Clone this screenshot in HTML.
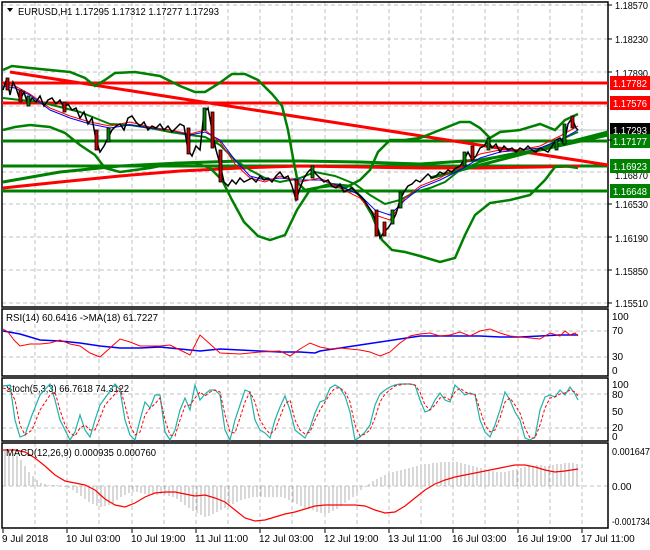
<!DOCTYPE html>
<html><head><meta charset="utf-8"><style>
html,body{margin:0;padding:0;background:#fff;}
svg{display:block;font-family:"Liberation Sans",sans-serif;}
</style></head><body>
<svg width="650" height="550" viewBox="0 0 650 550" xmlns="http://www.w3.org/2000/svg">
<rect width="650" height="550" fill="#fff"/>
<g stroke="#c0c0c0" stroke-dasharray="4,3" stroke-width="1">
<line x1="35" y1="2" x2="35" y2="529"/><line x1="67" y1="2" x2="67" y2="529"/><line x1="99" y1="2" x2="99" y2="529"/><line x1="132" y1="2" x2="132" y2="529"/><line x1="164" y1="2" x2="164" y2="529"/><line x1="196" y1="2" x2="196" y2="529"/><line x1="228" y1="2" x2="228" y2="529"/><line x1="260" y1="2" x2="260" y2="529"/><line x1="292" y1="2" x2="292" y2="529"/><line x1="325" y1="2" x2="325" y2="529"/><line x1="357" y1="2" x2="357" y2="529"/><line x1="389" y1="2" x2="389" y2="529"/><line x1="421" y1="2" x2="421" y2="529"/><line x1="453" y1="2" x2="453" y2="529"/><line x1="485" y1="2" x2="485" y2="529"/><line x1="518" y1="2" x2="518" y2="529"/><line x1="550" y1="2" x2="550" y2="529"/><line x1="582" y1="2" x2="582" y2="529"/>
<line x1="2" y1="5" x2="608" y2="5"/><line x1="2" y1="39" x2="608" y2="39"/><line x1="2" y1="72" x2="608" y2="72"/><line x1="2" y1="106" x2="608" y2="106"/><line x1="2" y1="140" x2="608" y2="140"/><line x1="2" y1="172" x2="608" y2="172"/><line x1="2" y1="204" x2="608" y2="204"/><line x1="2" y1="237" x2="608" y2="237"/><line x1="2" y1="270" x2="608" y2="270"/><line x1="2" y1="303" x2="608" y2="303"/>
<line x1="2" y1="331" x2="608" y2="331"/><line x1="2" y1="357" x2="608" y2="357"/>
<line x1="2" y1="394" x2="608" y2="394"/><line x1="2" y1="428" x2="608" y2="428"/>
<line x1="2" y1="486" x2="608" y2="486"/>
</g>
<line x1="2" y1="130" x2="608" y2="130" stroke="#c0c0c0" stroke-width="1"/>
<g fill="none" stroke="#000" stroke-width="1.5">
<rect x="2" y="2" width="606" height="305"/>
<rect x="2" y="309" width="606" height="67"/>
<rect x="2" y="378" width="606" height="63"/>
<rect x="2" y="443" width="606" height="85"/>
</g>
<g stroke-width="3">
<line x1="2" y1="83" x2="608" y2="83" stroke="#f00"/>
<line x1="2" y1="103" x2="608" y2="103" stroke="#f00"/>
<line x1="2" y1="141" x2="608" y2="141" stroke="#008000"/>
<line x1="2" y1="166" x2="608" y2="166" stroke="#008000"/>
<line x1="2" y1="191" x2="608" y2="191" stroke="#008000"/>
</g>
<line x1="10" y1="72" x2="608" y2="165" stroke="#f00" stroke-width="3"/>
<polyline fill="none" stroke="#f00" stroke-width="3" points="3,188 60,182 120,176 180,171 240,168 300,166 360,167 420,168 480,168 540,167 580,166"/>
<polyline fill="none" stroke="#008000" stroke-width="3" points="3,182 60,172 120,166 180,163 240,161 300,161 360,162 420,164 480,160 540,150 608,135"/>
<line x1="430" y1="178" x2="608" y2="132" stroke="#008000" stroke-width="3"/>
<g fill="none" stroke="#008000" stroke-width="2.5">
<polyline points="3,70 12,66 30,68 50,70 70,72 85,78 95,86 105,80 115,73 135,72 160,76 180,86 195,92 205,92 218,84 232,74 245,74 258,80 272,94 282,106 288,130 293,158 298,183 305,190 315,188 330,186 345,188 360,180 370,170 378,152 390,140 405,140 420,138 440,130 460,122 470,122 480,128 490,138 500,132 520,130 540,124 555,130 565,120 578,114"/>
<polyline points="3,130 15,127 30,125 50,127 65,133 80,145 95,155 105,168 120,172 150,168 175,163 195,163 210,168 222,180 232,200 244,222 258,236 270,240 285,235 297,210 310,190 330,184 350,186 362,198 372,215 382,240 392,250 405,252 420,256 440,262 455,258 465,235 475,215 490,203 510,200 530,195 545,180 555,167 565,166 578,168"/>
<polyline stroke-width="2" points="3,98 20,100 40,102 60,107 80,112 95,118 110,124 130,125 150,128 170,132 190,135 205,137 220,145 235,160 250,170 265,178 280,182 300,178 315,172 335,176 355,184 370,195 385,204 400,200 415,192 430,188 445,182 460,170 480,162 500,156 520,152 540,150 560,140 578,132"/>
</g>
<polyline fill="none" stroke="#00f" stroke-width="1" points="3,86 15,88 30,95 50,110 70,118 90,124 110,128 130,125 150,128 170,130 190,135 205,132 220,140 235,160 250,176 265,180 280,178 300,180 320,180 340,186 360,195 375,210 390,215 405,200 420,188 440,180 460,170 480,158 500,152 520,150 540,148 560,140 578,130"/>
<polyline fill="none" stroke="#f00" stroke-width="1" points="3,84 15,86 30,94 50,108 70,116 90,122 110,126 130,122 150,127 170,130 190,134 205,130 220,142 235,164 250,178 265,182 280,176 300,182 320,178 340,188 360,198 375,215 390,220 405,198 420,186 440,178 460,166 480,154 500,150 520,150 540,146 560,136 578,126"/>
<g stroke="#000" stroke-width="1">
<polyline fill="none" stroke-width="1.5" points="3,90 7,78 10,95 13,82 16,88 20,100 24,92 28,105 32,98 36,102 40,96 44,106 48,100 52,98 56,104 60,100 64,108 68,104 72,110 76,108 80,118 84,112 88,124 92,118 96,140 100,152 104,146 108,138 112,130 116,126 120,124 124,130 128,118 132,116 136,122 140,126 144,122 148,130 152,126 156,128 160,124 164,130 168,126 172,132 176,128 180,124 184,126 188,150 192,156 196,146 200,150 204,112 208,108 212,130 216,150 220,164 224,182 228,186 232,180 236,184 240,178 244,182 248,180 252,178 256,182 260,176 264,180 268,178 272,182 276,176 280,172 284,178 288,176 292,186 296,200 300,188 304,178 308,172 312,168 316,174 320,178 324,182 328,180 332,186 336,188 340,184 344,192 348,190 352,188 356,192 360,196 364,200 368,206 372,212 376,222 380,238 384,232 388,228 392,222 396,214 400,200 404,192 408,186 412,184 416,180 420,182 424,178 428,174 432,178 436,176 440,172 444,174 448,170 452,172 456,168 460,166 464,160 468,152 472,160 476,156 480,148 484,146 488,140 492,148 496,144 500,152 504,146 508,150 512,148 516,152 520,148 524,150 528,146 532,150 536,152 540,148 544,150 548,152 552,146 556,140 560,138 564,144 568,124 572,118 576,128 578,130"/>
</g>
<g stroke="#000" stroke-width="0.8">
<rect x="6" y="78" width="3" height="12" fill="#c00"/><rect x="19" y="90" width="3" height="12" fill="#c00"/><rect x="27" y="96" width="3" height="10" fill="#080"/><rect x="63" y="102" width="3" height="10" fill="#c00"/><rect x="95" y="130" width="3" height="20" fill="#c00"/><rect x="107" y="128" width="3" height="14" fill="#080"/><rect x="187" y="128" width="3" height="26" fill="#c00"/><rect x="203" y="108" width="3" height="22" fill="#080"/><rect x="211" y="112" width="3" height="36" fill="#c00"/><rect x="219" y="150" width="3" height="32" fill="#c00"/><rect x="295" y="180" width="3" height="20" fill="#c00"/><rect x="311" y="166" width="3" height="12" fill="#080"/><rect x="375" y="210" width="3" height="26" fill="#c00"/><rect x="383" y="222" width="3" height="14" fill="#c00"/><rect x="391" y="210" width="3" height="14" fill="#080"/><rect x="399" y="192" width="3" height="16" fill="#080"/><rect x="463" y="152" width="3" height="14" fill="#080"/><rect x="471" y="146" width="3" height="14" fill="#c00"/><rect x="487" y="138" width="3" height="12" fill="#080"/><rect x="555" y="140" width="3" height="10" fill="#080"/><rect x="563" y="124" width="3" height="20" fill="#080"/><rect x="571" y="116" width="3" height="12" fill="#c00"/>
</g>
<g font-size="10" fill="#000">
<text x="615" y="9" textLength="33" lengthAdjust="spacingAndGlyphs">1.18570</text><text x="615" y="43" textLength="33" lengthAdjust="spacingAndGlyphs">1.18230</text><text x="615" y="77" textLength="33" lengthAdjust="spacingAndGlyphs">1.17890</text><text x="615" y="145" textLength="33" lengthAdjust="spacingAndGlyphs">1.17210</text><text x="615" y="179" textLength="33" lengthAdjust="spacingAndGlyphs">1.16870</text><text x="615" y="208" textLength="33" lengthAdjust="spacingAndGlyphs">1.16530</text><text x="615" y="242" textLength="33" lengthAdjust="spacingAndGlyphs">1.16190</text><text x="615" y="275" textLength="33" lengthAdjust="spacingAndGlyphs">1.15850</text><text x="615" y="307" textLength="33" lengthAdjust="spacingAndGlyphs">1.15510</text>
</g>
<g font-size="10">
<rect x="610" y="76" width="40" height="14" fill="#f00"/><text x="613" y="87" fill="#fff" textLength="34" lengthAdjust="spacingAndGlyphs">1.17782</text>
<rect x="610" y="96" width="40" height="14" fill="#f00"/><text x="613" y="107" fill="#fff" textLength="34" lengthAdjust="spacingAndGlyphs">1.17576</text>
<rect x="610" y="123" width="40" height="14" fill="#000"/><text x="613" y="134" fill="#fff" textLength="34" lengthAdjust="spacingAndGlyphs">1.17293</text>
<rect x="610" y="134" width="40" height="14" fill="#008000"/><text x="613" y="145" fill="#fff" textLength="34" lengthAdjust="spacingAndGlyphs">1.17177</text>
<rect x="610" y="159" width="40" height="14" fill="#008000"/><text x="613" y="170" fill="#fff" textLength="34" lengthAdjust="spacingAndGlyphs">1.16923</text>
<rect x="610" y="184" width="40" height="14" fill="#008000"/><text x="613" y="195" fill="#fff" textLength="34" lengthAdjust="spacingAndGlyphs">1.16648</text>
</g>
<g stroke="#000"><line x1="608" y1="5" x2="612" y2="5"/><line x1="608" y1="39" x2="612" y2="39"/><line x1="608" y1="72" x2="612" y2="72"/><line x1="608" y1="140" x2="612" y2="140"/><line x1="608" y1="204" x2="612" y2="204"/><line x1="608" y1="237" x2="612" y2="237"/><line x1="608" y1="270" x2="612" y2="270"/><line x1="608" y1="303" x2="612" y2="303"/></g>
<path d="M7,8 L13,8 L10,12 Z" fill="#000"/>
<text x="18" y="15" font-size="10" fill="#000" textLength="201" lengthAdjust="spacingAndGlyphs">EURUSD,H1  1.17295 1.17312 1.17277 1.17293</text>
<text x="6" y="321" font-size="10" textLength="152" lengthAdjust="spacingAndGlyphs">RSI(14) 60.6416  -&gt;MA(18) 61.7227</text>
<polyline fill="none" stroke="#00f" stroke-width="1.5" points="3,331 20,334 40,340 60,341 80,343 100,346 120,348 140,348 160,347 180,349 200,351 220,349 240,350 260,351 280,352 300,352 315,353 320,351 340,348 360,345 380,342 400,339 420,336 440,336 460,336 480,336 500,337 520,337 540,336 560,335 578,335"/>
<polyline fill="none" stroke="#f00" stroke-width="1" points="3,329 8,332 14,340 20,346 30,344 40,344 50,343 60,340 70,344 80,346 90,353 100,357 110,348 120,339 130,342 140,346 150,346 160,346 170,345 180,350 190,355 200,335 210,344 220,353 240,354 260,352 280,351 290,356 300,349 310,343 320,347 330,349 340,348 350,349 360,350 370,352 380,356 390,352 400,343 410,336 420,334 430,333 440,336 450,335 460,332 470,336 480,331 490,329 500,333 510,336 520,337 530,338 540,339 550,333 560,336 565,331 570,335 575,333 578,336"/>
<g font-size="10"><text x="612" y="320">100</text><text x="612" y="334">70</text><text x="612" y="360">30</text><text x="612" y="374">0</text></g>
<text x="6" y="392" font-size="10" textLength="123" lengthAdjust="spacingAndGlyphs">Stoch(5,3,3) 66.7618 74.3122</text>
<polyline fill="none" stroke="#20b2aa" stroke-width="1.2" points="3,386 10,385 15,420 20,437 25,435 32,415 40,395 50,384 55,400 60,420 65,430 70,440 75,432 80,415 85,430 90,437 95,420 100,405 105,398 115,384 120,390 125,420 130,435 135,440 140,420 145,402 150,408 155,395 160,395 165,432 170,440 175,430 180,410 185,398 190,410 195,385 200,400 205,394 210,390 215,390 220,395 225,430 230,440 235,420 240,405 245,390 250,392 255,420 260,430 265,433 270,438 275,420 280,407 285,396 290,410 295,430 300,434 305,438 310,428 315,413 320,402 325,400 330,388 335,385 340,388 345,396 350,412 355,440 360,437 365,432 370,425 375,405 380,394 385,390 390,387 395,385 400,384 405,384 410,384 415,385 420,400 425,412 430,410 435,400 440,393 445,400 450,402 455,385 460,390 465,395 470,393 475,395 480,420 485,432 490,437 495,425 500,410 505,392 510,400 515,412 520,420 525,438 530,440 535,437 540,410 545,397 550,395 555,397 560,390 565,395 570,387 575,394 578,400"/>
<polyline fill="none" stroke="#f00" stroke-width="1" stroke-dasharray="3,2" points="3,388 10,390 15,400 20,425 25,435 32,430 40,410 50,395 55,392 60,410 65,425 70,433 75,436 80,428 85,425 90,430 95,430 100,418 105,405 115,394 120,388 125,405 130,425 135,435 140,432 145,415 150,408 155,404 160,398 165,420 170,435 175,436 180,420 185,406 190,405 195,398 200,392 205,396 210,392 215,390 220,392 225,415 230,432 235,433 240,418 245,402 250,392 255,402 260,420 265,428 270,434 275,430 280,417 285,404 290,400 295,420 300,430 305,434 310,432 315,420 320,410 325,402 330,394 335,388 340,388 345,392 350,402 355,425 360,436 365,434 370,430 375,418 380,402 385,394 390,390 395,386 400,385 405,384 410,384 415,385 420,392 425,405 430,410 435,405 440,398 445,397 450,400 455,392 460,388 465,392 470,394 475,394 480,410 485,425 490,432 495,430 500,418 505,402 510,398 515,405 520,413 525,428 530,438 535,438 540,425 545,408 550,398 555,397 560,394 565,393 570,390 575,392 578,396"/>
<g font-size="10"><text x="612" y="388">100</text><text x="612" y="398">80</text><text x="612" y="415">50</text><text x="612" y="431">20</text><text x="612" y="440">0</text></g>
<g stroke="#b0b0b0" stroke-width="1">
<path d="M5,486V450M9,486V451M13,486V453M17,486V456M21,486V460M25,486V466M29,486V472M33,486V476M37,486V480M41,486V483M45,486V484M49,486V485M53,486V485M57,486V485M61,486V486M65,486V487M69,486V488M73,486V490M77,486V493M81,486V496M85,486V499M89,486V502M93,486V504M97,486V506M101,486V507M105,486V506M109,486V505M113,486V503M117,486V500M121,486V497M125,486V495M129,486V493M133,486V492M137,486V492M141,486V493M145,486V494M149,486V495M153,486V495M157,486V495M161,486V494M165,486V494M169,486V496M173,486V497M177,486V499M181,486V502M185,486V505M189,486V508M193,486V511M197,486V513M201,486V515M205,486V517M209,486V516M213,486V514M217,486V512M221,486V510M225,486V508M229,486V506M233,486V504M237,486V502M241,486V500M245,486V499M249,486V498M253,486V497M257,486V497M261,486V497M265,486V497M269,486V497M273,486V497M277,486V497M281,486V497M285,486V498M289,486V500M293,486V502M297,486V504M301,486V506M305,486V508M309,486V509M313,486V510M317,486V512M321,486V513M325,486V514M329,486V513M333,486V511M337,486V509M341,486V506M345,486V503M349,486V500M353,486V497M357,486V494M361,486V490M365,486V487M369,486V484M373,486V481M377,486V479M381,486V477M385,486V475M389,486V473M393,486V472M397,486V471M401,486V470M405,486V469M409,486V468M413,486V467M417,486V466M421,486V465M425,486V464M429,486V464M433,486V463M437,486V463M441,486V462M445,486V462M449,486V462M453,486V462M457,486V462M461,486V463M465,486V464M469,486V465M473,486V466M477,486V467M481,486V468M485,486V469M489,486V470M493,486V471M497,486V472M501,486V472M505,486V472M509,486V471M513,486V470M517,486V469M521,486V468M525,486V467M529,486V466M533,486V466M537,486V465M541,486V465M545,486V466M549,486V466M553,486V465M557,486V464M561,486V464M565,486V463M569,486V463M573,486V463M577,486V464"/>
</g>
<polyline fill="none" stroke="#f00" stroke-width="1.2" points="3,450 15,450 25,452 35,458 45,466 55,475 65,481 75,483 85,485 95,490 105,499 115,505 125,507 135,503 145,497 155,493 165,492 175,492 185,494 195,496 205,495 215,498 225,502 235,510 245,518 255,521 265,520 275,517 285,514 295,512 305,509 315,506 325,505 335,505 345,505 355,505 365,506 375,510 385,513 395,512 405,506 415,498 425,490 435,484 445,480 455,477 465,475 475,473 485,471 495,469 505,467 515,465 525,465 535,467 545,470 555,472 565,471 578,469"/>
<text x="6" y="456" font-size="10" textLength="150" lengthAdjust="spacingAndGlyphs">MACD(12,26,9) 0.000935 0.000760</text>
<g font-size="10"><text x="612" y="455" textLength="38" lengthAdjust="spacingAndGlyphs">0.001647</text><text x="612" y="490">0.00</text><text x="612" y="525" textLength="38" lengthAdjust="spacingAndGlyphs">-0.001734</text></g>
<g stroke="#000"><line x1="3" y1="529" x2="3" y2="533"/><line x1="67" y1="529" x2="67" y2="533"/><line x1="132" y1="529" x2="132" y2="533"/><line x1="196" y1="529" x2="196" y2="533"/><line x1="260" y1="529" x2="260" y2="533"/><line x1="325" y1="529" x2="325" y2="533"/><line x1="389" y1="529" x2="389" y2="533"/><line x1="453" y1="529" x2="453" y2="533"/><line x1="518" y1="529" x2="518" y2="533"/><line x1="582" y1="529" x2="582" y2="533"/></g>
<g font-size="10">
<text x="2" y="542">9 Jul 2018</text><text x="66" y="542">10 Jul 03:00</text><text x="131" y="542">10 Jul 19:00</text><text x="195" y="542">11 Jul 11:00</text><text x="259" y="542">12 Jul 03:00</text><text x="324" y="542">12 Jul 19:00</text><text x="388" y="542">13 Jul 11:00</text><text x="452" y="542">16 Jul 03:00</text><text x="517" y="542">16 Jul 19:00</text><text x="581" y="542">17 Jul 11:00</text>
</g>
</svg>
</body></html>
